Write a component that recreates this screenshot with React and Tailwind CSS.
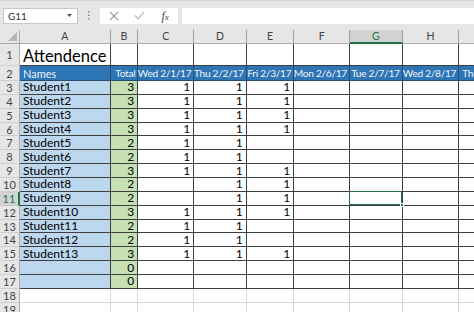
import React from "react";

const GRID =
  "grid grid-cols-[20px_90.7px_27.6px_56px_52.4px_47.6px_55.7px_52.7px_56.6px_60px]";

const letters = ["A", "B", "C", "D", "E", "F", "G", "H", "I"];
const dates = [
  "Wed 2/1/17",
  "Thu 2/2/17",
  "Fri 2/3/17",
  "Mon 2/6/17",
  "Tue 2/7/17",
  "Wed 2/8/17",
  "Thu 2/9/17",
];

const data = [
  ["Student1", 3, 1, 1, 1],
  ["Student2", 3, 1, 1, 1],
  ["Student3", 3, 1, 1, 1],
  ["Student4", 3, 1, 1, 1],
  ["Student5", 2, 1, 1, ""],
  ["Student6", 2, 1, 1, ""],
  ["Student7", 3, 1, 1, 1],
  ["Student8", 2, "", 1, 1],
  ["Student9", 2, "", 1, 1],
  ["Student10", 3, 1, 1, 1],
  ["Student11", 2, 1, 1, ""],
  ["Student12", 2, 1, 1, ""],
  ["Student13", 3, 1, 1, 1],
  ["", 0, "", "", ""],
  ["", 0, "", "", ""],
];

function FormulaBar() {
  return (
    <div className="h-[30px] bg-[#e6e6e6] flex items-center border-t border-[#d4d4d4]">
      <div className="ml-[3px] w-[75px] h-[16px] bg-white border border-[#c8c8c8] flex items-center justify-between pl-[4px] pr-[5px]">
        <span className="text-[10px] text-[#333] leading-none">G11</span>
        <svg width="5" height="3" viewBox="0 0 5 3">
          <path d="M0 0 L5 0 L2.5 3 Z" fill="#555" />
        </svg>
      </div>
      <div className="w-[22px] flex justify-center">
        <svg width="2" height="9" viewBox="0 0 2 9">
          <rect x="0" y="0" width="1.5" height="1.5" fill="#8a8a8a" />
          <rect x="0" y="3.5" width="1.5" height="1.5" fill="#8a8a8a" />
          <rect x="0" y="7" width="1.5" height="1.5" fill="#8a8a8a" />
        </svg>
      </div>
      <div className="w-[78px] h-[16px] bg-white flex items-center">
        <div className="w-[26px] flex justify-center ml-[1px]">
          <svg width="10" height="10" viewBox="0 0 10 10">
            <path d="M1 1 L9 9 M9 1 L1 9" stroke="#9a9a9a" strokeWidth="1.1" fill="none" />
          </svg>
        </div>
        <div className="w-[26px] flex justify-center">
          <svg width="11" height="9" viewBox="0 0 11 9">
            <path d="M1 4.5 L4 7.8 L10 1" stroke="#a8a8a8" strokeWidth="1.1" fill="none" />
          </svg>
        </div>
        <div className="w-[26px] flex justify-center">
          <span className="font-['Liberation_Serif',serif] italic text-[12px] leading-none text-[#444]">
            f<span className="text-[9px]">x</span>
          </span>
        </div>
      </div>
      <div className="ml-[4px] flex-1 h-[16px] bg-white" />
    </div>
  );
}

function ColumnHeaders() {
  return (
    <div className={`${GRID} h-[14px] bg-[#e6e6e6] border-b border-[#ababab]`}>
      <div className="border-r border-[#ababab] flex items-end justify-end pr-[2px] pb-[2px]">
        <svg width="9" height="9" viewBox="0 0 9 9">
          <path d="M9 0 L9 9 L0 9 Z" fill="#b4b4b4" />
        </svg>
      </div>
      {letters.map((l) =>
        l === "G" ? (
          <div
            key={l}
            className="bg-[#d2d2d2] border-r border-[#9e9e9e] border-b-2 border-b-[#217346] -mb-px flex items-center justify-center text-[10.5px] leading-none text-[#217346]"
          >
            {l}
          </div>
        ) : (
          <div
            key={l}
            className="border-r border-[#9e9e9e] flex items-center justify-center text-[10.5px] leading-none text-[#444]"
          >
            {l === "I" ? "" : l}
          </div>
        )
      )}
    </div>
  );
}

function RowHeader({ n, active }) {
  return (
    <div
      className={
        active
          ? "bg-[#d2d2d2] border-r-2 border-[#217346] border-b border-b-[#c6c6c6] flex items-center justify-center text-[11px] leading-none text-[#217346]"
          : "bg-[#e6e6e6] border-r border-[#ababab] border-b border-b-[#d0d0d0] flex items-center justify-center text-[11px] leading-none text-[#444]"
      }
    >
      {n}
    </div>
  );
}

const cellB = "border-r border-b border-[#3e3e3e]";
const hdr =
  "bg-[#2e75b6] border-b border-[#2a4e70] flex items-center text-[10.2px] tracking-[-0.3px] leading-none text-[#eef4fb] whitespace-nowrap";

export default function App() {
  return (
    <div className="w-[474px] h-[312px] overflow-hidden bg-white font-['Lato',sans-serif]">
      <FormulaBar />
      <ColumnHeaders />

      {/* Row 1 */}
      <div className={`${GRID} h-[22px]`}>
        <RowHeader n={1} />
        <div className={`${cellB} flex items-end pl-[3px] pb-[1px]`}>
          <span className="text-[16.5px] leading-none text-black whitespace-nowrap">Attendence</span>
        </div>
        {Array.from({ length: 7 }).map((_, i) => (
          <div key={i} className={cellB} />
        ))}
        <div className="border-b border-[#3e3e3e]" />
      </div>

      {/* Row 2 */}
      <div className={`${GRID} h-[15px]`}>
        <RowHeader n={2} />
        <div className={`${hdr} border-r pl-[3px] text-[11px] tracking-normal`}>Names</div>
        <div className={`${hdr} border-r justify-end pr-[2px] tracking-[-0.2px]`}>Total</div>
        {dates.map((d, i) => (
          <div
            key={d}
            className={i === 6 ? `${hdr} pl-[3px]` : `${hdr} border-r justify-end pr-[2px]`}
          >
            {d}
          </div>
        ))}
      </div>

      {/* Rows 3-17 */}
      {data.map((r, idx) => {
        const n = idx + 3;
        return (
          <div key={n} className={`${GRID} h-[13.87px]`}>
            <RowHeader n={n} active={n === 11} />
            <div className={`${cellB} bg-[#bdd7ee] flex items-center pl-[3px] text-[12px] leading-none text-black`}>
              {r[0]}
            </div>
            <div className={`${cellB} bg-[#c6e0b4] flex items-center justify-end pr-[3px] text-[12px] leading-none text-black`}>
              {r[1]}
            </div>
            {[r[2], r[3], r[4]].map((v, j) => (
              <div key={j} className={`${cellB} flex items-center justify-end pr-[3px] text-[12px] leading-none text-black`}>
                {v}
              </div>
            ))}
            <div className={cellB} />
            <div className={`${cellB} relative`}>
              {n === 11 && (
                <div className="absolute z-10 -left-px -top-px right-0 bottom-0 border border-[#217346]">
                  <div className="absolute -right-[3px] -bottom-[3px] w-[4px] h-[4px] bg-[#217346] border border-white" />
                </div>
              )}
            </div>
            <div className={cellB} />
            <div className="border-b border-[#3e3e3e]" />
          </div>
        );
      })}

      {/* Rows 18-19 */}
      {[18, 19].map((n) => (
        <div key={n} className={`${GRID} h-[14px]`}>
          <RowHeader n={n} />
          {Array.from({ length: 8 }).map((_, i) => (
            <div key={i} className="border-r border-b border-[#dadada]" />
          ))}
          <div className="border-b border-[#dadada]" />
        </div>
      ))}
    </div>
  );
}
